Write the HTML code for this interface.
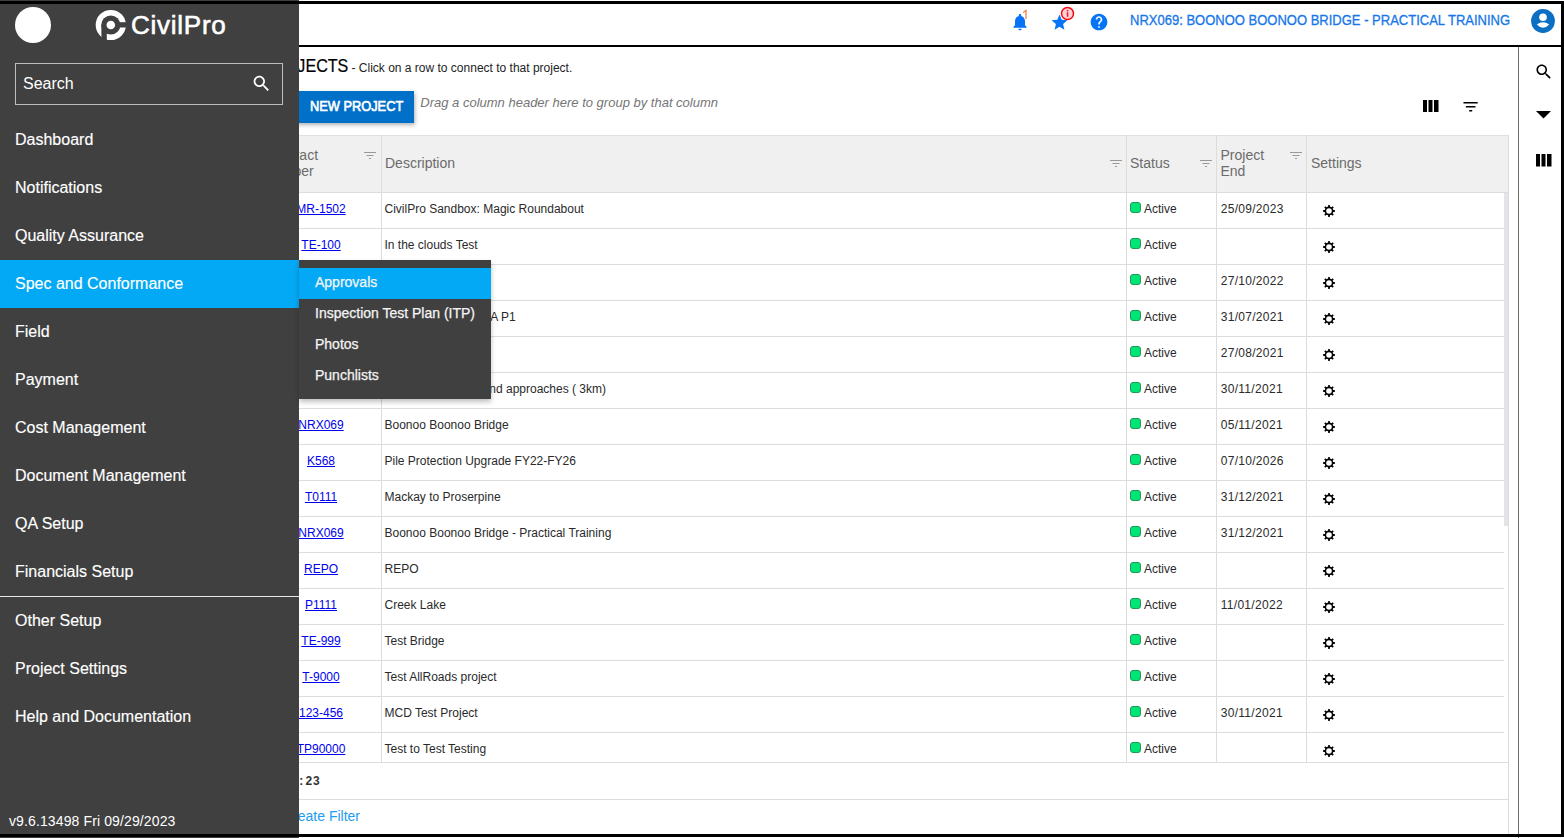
<!DOCTYPE html>
<html><head><meta charset="utf-8">
<style>
*{box-sizing:border-box;margin:0;padding:0}
html,body{width:1564px;height:838px;overflow:hidden;background:#fff;font-family:"Liberation Sans",sans-serif}
body{position:relative}
.t{position:absolute;white-space:nowrap}
.a{position:absolute}
</style></head><body>

<div class="a" style="left:0;top:0;width:1564px;height:45px;background:#fff"></div>
<div class="a" style="left:0;top:45px;width:1564px;height:2px;background:#000"></div>
<div class="a" style="left:1518px;top:47px;width:1px;height:791px;background:#6f6f6f"></div>
<svg class="a" style="left:1009.5px;top:12px" width="20" height="20" viewBox="0 0 24 24"><path fill="#0574f7" d="M12 22c1.1 0 2-.9 2-2h-4c0 1.1.9 2 2 2zm6-6v-5c0-3.07-1.64-5.64-4.5-6.32V4c0-.83-.67-1.5-1.5-1.5s-1.5.67-1.5 1.5v.68C7.63 5.36 6 7.92 6 11v5l-2 2v1h16v-1l-2-2z"/></svg>
<svg class="a" style="left:1020px;top:8px" width="10" height="13" viewBox="0 0 10 13"><path d="M3.2 4.6 L6 2.4 L6 11" fill="none" stroke="#f26a2a" stroke-width="1.1"/></svg>
<svg class="a" style="left:1050px;top:13px" width="19" height="19" viewBox="0 0 24 24"><path fill="#0574f7" d="M12 17.27L18.18 21l-1.64-7.03L22 9.24l-7.19-.61L12 2 9.19 8.63 2 9.24l5.46 4.73L5.82 21z"/></svg>
<svg class="a" style="left:1060px;top:6px" width="15" height="15" viewBox="0 0 15 15"><circle cx="7.5" cy="7.5" r="6" fill="#ffd3d6" stroke="#f5050f" stroke-width="1.5"/><rect x="6.8" y="6.3" width="1.5" height="4.5" fill="#f0102a"/><rect x="6.8" y="4" width="1.5" height="1.5" fill="#f0102a"/></svg>
<svg class="a" style="left:1089px;top:12px" width="20" height="20" viewBox="0 0 24 24"><path fill="#0574f7" d="M12 2C6.48 2 2 6.48 2 12s4.48 10 10 10 10-4.48 10-10S17.52 2 12 2zm1 17h-2v-2h2v2zm2.07-7.75l-.9.92C13.45 12.9 13 13.5 13 15h-2v-.5c0-1.1.45-2.1 1.17-2.83l1.24-1.26c.37-.36.59-.86.59-1.41 0-1.1-.9-2-2-2s-2 .9-2 2H8c0-2.21 1.79-4 4-4s4 1.79 4 4c0 .88-.36 1.68-.93 2.25z"/></svg>
<div class="t " style="left:1129.5px;top:13.15px;font-size:14px;line-height:14px;color:#1777e8;font-weight:normal;font-style:normal;transform:scaleX(0.929);transform-origin:0 0;-webkit-text-stroke:0.3px #1777e8">NRX069: BOONOO BOONOO BRIDGE - PRACTICAL TRAINING</div>
<svg class="a" style="left:1531px;top:9px" width="24" height="24" viewBox="0 0 24 24"><circle cx="12" cy="12" r="11.9" fill="#0b6fc4"/><circle cx="12" cy="8.3" r="3.8" fill="#fff"/><path d="M5.8 15.5Q12 11.1 18.2 15.5Q12 22.1 5.8 15.5Z" fill="#fff"/></svg>
<svg class="a" style="left:1533.5px;top:62px" width="19.6" height="19.6" viewBox="0 0 24 24"><path fill="#000" d="M15.5 14h-.79l-.28-.27C15.41 12.59 16 11.11 16 9.5 16 5.91 13.09 3 9.5 3S3 5.91 3 9.5 5.91 16 9.5 16c1.61 0 3.09-.59 4.23-1.57l.27.28v.79l5 4.99L20.49 19l-4.99-5zm-6 0C7.01 14 5 11.99 5 9.5S7.01 5 9.5 5 14 7.01 14 9.5 11.99 14 9.5 14z"/></svg>
<svg class="a" style="left:1536px;top:111px" width="16" height="8" viewBox="0 0 16 8"><path fill="#000" d="M0 0h15l-7.5 7.5z"/></svg>
<svg class="a" style="left:1536px;top:154px" width="16" height="13" viewBox="0 0 16 13"><rect x="0" y="0" width="4" height="12.5" fill="#000"/><rect x="5.5" y="0" width="4" height="12.5" fill="#000"/><rect x="11" y="0" width="4.5" height="12.5" fill="#000"/></svg>
<div class="t " style="left:254.65625px;top:57.89px;font-size:17.5px;line-height:17.5px;color:#000;font-weight:normal;font-style:normal;transform:scaleX(0.92);transform-origin:100% 0;-webkit-text-stroke:0.2px #000">PROJECTS</div>
<div class="t " style="left:351.5px;top:62.34px;font-size:12px;line-height:12px;color:#222;font-weight:normal;font-style:normal;word-spacing:0px">- Click on a row to connect to that project.</div>
<div class="a" style="left:250px;top:91px;width:164px;height:32px;background:#0070c9;box-shadow:1px 2px 4px rgba(0,0,0,.3)"></div>
<div class="t " style="left:309.6px;top:99.15px;font-size:14px;line-height:14px;color:#fff;font-weight:normal;font-style:normal;transform:scaleX(0.915);transform-origin:0 0;-webkit-text-stroke:0.65px #fff">NEW PROJECT</div>
<div class="t " style="left:420.3px;top:96.20px;font-size:13px;line-height:13px;color:#757575;font-weight:normal;font-style:italic;">Drag a column header here to group by that column</div>
<svg class="a" style="left:1423px;top:100px" width="16" height="12" viewBox="0 0 16 12"><rect x="0" y="0" width="4" height="12" fill="#000"/><rect x="5.5" y="0" width="4" height="12" fill="#000"/><rect x="11" y="0" width="4.5" height="12" fill="#000"/></svg>
<svg class="a" style="left:1463px;top:101.6px" width="16" height="11" viewBox="0 0 16 11"><rect x="0.4" y="0" width="14.4" height="1.5" rx="0.6" fill="#000"/><rect x="2.8" y="4.05" width="9.8" height="1.5" rx="0.6" fill="#000"/><rect x="6.1" y="8.0" width="3.2" height="1.5" rx="0.6" fill="#000"/></svg>
<div class="a" style="left:261px;top:135px;width:1248px;height:57px;background:#f0f0f0;border-top:1px solid #e0e0e0"></div>
<div class="a" style="left:261px;top:192px;width:1248px;height:1px;background:#dcdcdc"></div>
<div class="a" style="left:1508px;top:135px;width:1px;height:699px;background:#dcdcdc"></div>
<div class="a" style="left:381px;top:135px;width:1px;height:627px;background:#dcdcdc"></div>
<div class="a" style="left:1126px;top:135px;width:1px;height:627px;background:#dcdcdc"></div>
<div class="a" style="left:1216px;top:135px;width:1px;height:627px;background:#dcdcdc"></div>
<div class="a" style="left:1306px;top:135px;width:1px;height:627px;background:#dcdcdc"></div>
<div class="t " style="left:265.109375px;top:147.85px;font-size:14px;line-height:14px;color:#6b6b6b;font-weight:normal;font-style:normal;">Contract</div>
<div class="t " style="left:263.934375px;top:163.95px;font-size:14px;line-height:14px;color:#6b6b6b;font-weight:normal;font-style:normal;">Number</div>
<div class="t " style="left:385px;top:156.15px;font-size:14px;line-height:14px;color:#6b6b6b;font-weight:normal;font-style:normal;">Description</div>
<div class="t " style="left:1130px;top:156.15px;font-size:14px;line-height:14px;color:#6b6b6b;font-weight:normal;font-style:normal;">Status</div>
<div class="t " style="left:1220.5px;top:147.85px;font-size:14px;line-height:14px;color:#6b6b6b;font-weight:normal;font-style:normal;">Project</div>
<div class="t " style="left:1220.5px;top:163.95px;font-size:14px;line-height:14px;color:#6b6b6b;font-weight:normal;font-style:normal;">End</div>
<div class="t " style="left:1311px;top:156.15px;font-size:14px;line-height:14px;color:#6b6b6b;font-weight:normal;font-style:normal;">Settings</div>
<svg class="a" style="left:364px;top:152px" width="13" height="8" viewBox="0 0 13 8"><rect x="0" y="0" width="12" height="1" fill="#999"/><rect x="2.5" y="3" width="7" height="1" fill="#999"/><rect x="5" y="6" width="2" height="1" fill="#999"/></svg>
<svg class="a" style="left:1110px;top:160px" width="13" height="8" viewBox="0 0 13 8"><rect x="0" y="0" width="12" height="1" fill="#999"/><rect x="2.5" y="3" width="7" height="1" fill="#999"/><rect x="5" y="6" width="2" height="1" fill="#999"/></svg>
<svg class="a" style="left:1200px;top:160px" width="13" height="8" viewBox="0 0 13 8"><rect x="0" y="0" width="12" height="1" fill="#999"/><rect x="2.5" y="3" width="7" height="1" fill="#999"/><rect x="5" y="6" width="2" height="1" fill="#999"/></svg>
<svg class="a" style="left:1290px;top:152px" width="13" height="8" viewBox="0 0 13 8"><rect x="0" y="0" width="12" height="1" fill="#999"/><rect x="2.5" y="3" width="7" height="1" fill="#999"/><rect x="5" y="6" width="2" height="1" fill="#999"/></svg>
<div class="a" style="left:261px;top:193px;width:1247px;height:569px;overflow:hidden">
<div class="t " style="left:35.3203125px;top:10.04px;font-size:12px;line-height:12px;color:#0000ee;font-weight:normal;font-style:normal;text-decoration:underline">MR-1502</div>
<div class="t " style="left:123.5px;top:10.04px;font-size:12px;line-height:12px;color:#2a2a2a;font-weight:normal;font-style:normal;">CivilPro Sandbox: Magic Roundabout</div>
<div class="a" style="left:869px;top:9.2px;width:11px;height:11px;background:#00e676;border:1px solid #1e9c55;border-radius:3px"></div>
<div class="t " style="left:883px;top:10.04px;font-size:12px;line-height:12px;color:#2a2a2a;font-weight:normal;font-style:normal;">Active</div>
<div class="t " style="left:959.7px;top:10.04px;font-size:12px;line-height:12px;color:#2a2a2a;font-weight:normal;font-style:normal;letter-spacing:0.3px">25/09/2023</div>
<svg class="a" style="left:1060.8px;top:10.6px" width="14" height="14" viewBox="-7 -7 14 14"><g fill="#000"><circle r="4.4"/><rect x="-0.9" y="-5.9" width="1.8" height="3" rx="0.3" transform="rotate(0)"/><rect x="-0.9" y="-5.9" width="1.8" height="3" rx="0.3" transform="rotate(45)"/><rect x="-0.9" y="-5.9" width="1.8" height="3" rx="0.3" transform="rotate(90)"/><rect x="-0.9" y="-5.9" width="1.8" height="3" rx="0.3" transform="rotate(135)"/><rect x="-0.9" y="-5.9" width="1.8" height="3" rx="0.3" transform="rotate(180)"/><rect x="-0.9" y="-5.9" width="1.8" height="3" rx="0.3" transform="rotate(225)"/><rect x="-0.9" y="-5.9" width="1.8" height="3" rx="0.3" transform="rotate(270)"/><rect x="-0.9" y="-5.9" width="1.8" height="3" rx="0.3" transform="rotate(315)"/></g><circle r="2.8" fill="#fff"/></svg>
<div class="a" style="left:0;top:35px;width:1243px;height:1px;background:#dcdcdc"></div>
<div class="t " style="left:40.328125px;top:46.04px;font-size:12px;line-height:12px;color:#0000ee;font-weight:normal;font-style:normal;text-decoration:underline">TE-100</div>
<div class="t " style="left:123.5px;top:46.04px;font-size:12px;line-height:12px;color:#2a2a2a;font-weight:normal;font-style:normal;">In the clouds Test</div>
<div class="a" style="left:869px;top:45.2px;width:11px;height:11px;background:#00e676;border:1px solid #1e9c55;border-radius:3px"></div>
<div class="t " style="left:883px;top:46.04px;font-size:12px;line-height:12px;color:#2a2a2a;font-weight:normal;font-style:normal;">Active</div>
<svg class="a" style="left:1060.8px;top:46.6px" width="14" height="14" viewBox="-7 -7 14 14"><g fill="#000"><circle r="4.4"/><rect x="-0.9" y="-5.9" width="1.8" height="3" rx="0.3" transform="rotate(0)"/><rect x="-0.9" y="-5.9" width="1.8" height="3" rx="0.3" transform="rotate(45)"/><rect x="-0.9" y="-5.9" width="1.8" height="3" rx="0.3" transform="rotate(90)"/><rect x="-0.9" y="-5.9" width="1.8" height="3" rx="0.3" transform="rotate(135)"/><rect x="-0.9" y="-5.9" width="1.8" height="3" rx="0.3" transform="rotate(180)"/><rect x="-0.9" y="-5.9" width="1.8" height="3" rx="0.3" transform="rotate(225)"/><rect x="-0.9" y="-5.9" width="1.8" height="3" rx="0.3" transform="rotate(270)"/><rect x="-0.9" y="-5.9" width="1.8" height="3" rx="0.3" transform="rotate(315)"/></g><circle r="2.8" fill="#fff"/></svg>
<div class="a" style="left:0;top:71px;width:1243px;height:1px;background:#dcdcdc"></div>
<div class="t " style="left:39.9921875px;top:82.04px;font-size:12px;line-height:12px;color:#0000ee;font-weight:normal;font-style:normal;text-decoration:underline">AB-200</div>
<div class="t " style="left:123.5px;top:82.04px;font-size:12px;line-height:12px;color:#2a2a2a;font-weight:normal;font-style:normal;">Hidden Project</div>
<div class="a" style="left:869px;top:81.2px;width:11px;height:11px;background:#00e676;border:1px solid #1e9c55;border-radius:3px"></div>
<div class="t " style="left:883px;top:82.04px;font-size:12px;line-height:12px;color:#2a2a2a;font-weight:normal;font-style:normal;">Active</div>
<div class="t " style="left:959.7px;top:82.04px;font-size:12px;line-height:12px;color:#2a2a2a;font-weight:normal;font-style:normal;letter-spacing:0.3px">27/10/2022</div>
<svg class="a" style="left:1060.8px;top:82.6px" width="14" height="14" viewBox="-7 -7 14 14"><g fill="#000"><circle r="4.4"/><rect x="-0.9" y="-5.9" width="1.8" height="3" rx="0.3" transform="rotate(0)"/><rect x="-0.9" y="-5.9" width="1.8" height="3" rx="0.3" transform="rotate(45)"/><rect x="-0.9" y="-5.9" width="1.8" height="3" rx="0.3" transform="rotate(90)"/><rect x="-0.9" y="-5.9" width="1.8" height="3" rx="0.3" transform="rotate(135)"/><rect x="-0.9" y="-5.9" width="1.8" height="3" rx="0.3" transform="rotate(180)"/><rect x="-0.9" y="-5.9" width="1.8" height="3" rx="0.3" transform="rotate(225)"/><rect x="-0.9" y="-5.9" width="1.8" height="3" rx="0.3" transform="rotate(270)"/><rect x="-0.9" y="-5.9" width="1.8" height="3" rx="0.3" transform="rotate(315)"/></g><circle r="2.8" fill="#fff"/></svg>
<div class="a" style="left:0;top:107px;width:1243px;height:1px;background:#dcdcdc"></div>
<div class="t " style="left:39.3203125px;top:118.04px;font-size:12px;line-height:12px;color:#0000ee;font-weight:normal;font-style:normal;text-decoration:underline">CD-300</div>
<div class="t " style="left:126.65312500000005px;top:118.04px;font-size:12px;line-height:12px;color:#2a2a2a;font-weight:normal;font-style:normal;">Pacific Highway SFA P1</div>
<div class="a" style="left:869px;top:117.2px;width:11px;height:11px;background:#00e676;border:1px solid #1e9c55;border-radius:3px"></div>
<div class="t " style="left:883px;top:118.04px;font-size:12px;line-height:12px;color:#2a2a2a;font-weight:normal;font-style:normal;">Active</div>
<div class="t " style="left:959.7px;top:118.04px;font-size:12px;line-height:12px;color:#2a2a2a;font-weight:normal;font-style:normal;letter-spacing:0.3px">31/07/2021</div>
<svg class="a" style="left:1060.8px;top:118.6px" width="14" height="14" viewBox="-7 -7 14 14"><g fill="#000"><circle r="4.4"/><rect x="-0.9" y="-5.9" width="1.8" height="3" rx="0.3" transform="rotate(0)"/><rect x="-0.9" y="-5.9" width="1.8" height="3" rx="0.3" transform="rotate(45)"/><rect x="-0.9" y="-5.9" width="1.8" height="3" rx="0.3" transform="rotate(90)"/><rect x="-0.9" y="-5.9" width="1.8" height="3" rx="0.3" transform="rotate(135)"/><rect x="-0.9" y="-5.9" width="1.8" height="3" rx="0.3" transform="rotate(180)"/><rect x="-0.9" y="-5.9" width="1.8" height="3" rx="0.3" transform="rotate(225)"/><rect x="-0.9" y="-5.9" width="1.8" height="3" rx="0.3" transform="rotate(270)"/><rect x="-0.9" y="-5.9" width="1.8" height="3" rx="0.3" transform="rotate(315)"/></g><circle r="2.8" fill="#fff"/></svg>
<div class="a" style="left:0;top:143px;width:1243px;height:1px;background:#dcdcdc"></div>
<div class="t " style="left:40.328125px;top:154.04px;font-size:12px;line-height:12px;color:#0000ee;font-weight:normal;font-style:normal;text-decoration:underline">EF-400</div>
<div class="t " style="left:123.5px;top:154.04px;font-size:12px;line-height:12px;color:#2a2a2a;font-weight:normal;font-style:normal;">Hidden</div>
<div class="a" style="left:869px;top:153.2px;width:11px;height:11px;background:#00e676;border:1px solid #1e9c55;border-radius:3px"></div>
<div class="t " style="left:883px;top:154.04px;font-size:12px;line-height:12px;color:#2a2a2a;font-weight:normal;font-style:normal;">Active</div>
<div class="t " style="left:959.7px;top:154.04px;font-size:12px;line-height:12px;color:#2a2a2a;font-weight:normal;font-style:normal;letter-spacing:0.3px">27/08/2021</div>
<svg class="a" style="left:1060.8px;top:154.6px" width="14" height="14" viewBox="-7 -7 14 14"><g fill="#000"><circle r="4.4"/><rect x="-0.9" y="-5.9" width="1.8" height="3" rx="0.3" transform="rotate(0)"/><rect x="-0.9" y="-5.9" width="1.8" height="3" rx="0.3" transform="rotate(45)"/><rect x="-0.9" y="-5.9" width="1.8" height="3" rx="0.3" transform="rotate(90)"/><rect x="-0.9" y="-5.9" width="1.8" height="3" rx="0.3" transform="rotate(135)"/><rect x="-0.9" y="-5.9" width="1.8" height="3" rx="0.3" transform="rotate(180)"/><rect x="-0.9" y="-5.9" width="1.8" height="3" rx="0.3" transform="rotate(225)"/><rect x="-0.9" y="-5.9" width="1.8" height="3" rx="0.3" transform="rotate(270)"/><rect x="-0.9" y="-5.9" width="1.8" height="3" rx="0.3" transform="rotate(315)"/></g><circle r="2.8" fill="#fff"/></svg>
<div class="a" style="left:0;top:179px;width:1243px;height:1px;background:#dcdcdc"></div>
<div class="t " style="left:38.9921875px;top:190.04px;font-size:12px;line-height:12px;color:#0000ee;font-weight:normal;font-style:normal;text-decoration:underline">GH-500</div>
<div class="t " style="left:183.609375px;top:190.04px;font-size:12px;line-height:12px;color:#2a2a2a;font-weight:normal;font-style:normal;">Bridge and approaches ( 3km)</div>
<div class="a" style="left:869px;top:189.2px;width:11px;height:11px;background:#00e676;border:1px solid #1e9c55;border-radius:3px"></div>
<div class="t " style="left:883px;top:190.04px;font-size:12px;line-height:12px;color:#2a2a2a;font-weight:normal;font-style:normal;">Active</div>
<div class="t " style="left:959.7px;top:190.04px;font-size:12px;line-height:12px;color:#2a2a2a;font-weight:normal;font-style:normal;letter-spacing:0.3px">30/11/2021</div>
<svg class="a" style="left:1060.8px;top:190.6px" width="14" height="14" viewBox="-7 -7 14 14"><g fill="#000"><circle r="4.4"/><rect x="-0.9" y="-5.9" width="1.8" height="3" rx="0.3" transform="rotate(0)"/><rect x="-0.9" y="-5.9" width="1.8" height="3" rx="0.3" transform="rotate(45)"/><rect x="-0.9" y="-5.9" width="1.8" height="3" rx="0.3" transform="rotate(90)"/><rect x="-0.9" y="-5.9" width="1.8" height="3" rx="0.3" transform="rotate(135)"/><rect x="-0.9" y="-5.9" width="1.8" height="3" rx="0.3" transform="rotate(180)"/><rect x="-0.9" y="-5.9" width="1.8" height="3" rx="0.3" transform="rotate(225)"/><rect x="-0.9" y="-5.9" width="1.8" height="3" rx="0.3" transform="rotate(270)"/><rect x="-0.9" y="-5.9" width="1.8" height="3" rx="0.3" transform="rotate(315)"/></g><circle r="2.8" fill="#fff"/></svg>
<div class="a" style="left:0;top:215px;width:1243px;height:1px;background:#dcdcdc"></div>
<div class="t " style="left:37.3203125px;top:226.04px;font-size:12px;line-height:12px;color:#0000ee;font-weight:normal;font-style:normal;text-decoration:underline">NRX069</div>
<div class="t " style="left:123.5px;top:226.04px;font-size:12px;line-height:12px;color:#2a2a2a;font-weight:normal;font-style:normal;">Boonoo Boonoo Bridge</div>
<div class="a" style="left:869px;top:225.2px;width:11px;height:11px;background:#00e676;border:1px solid #1e9c55;border-radius:3px"></div>
<div class="t " style="left:883px;top:226.04px;font-size:12px;line-height:12px;color:#2a2a2a;font-weight:normal;font-style:normal;">Active</div>
<div class="t " style="left:959.7px;top:226.04px;font-size:12px;line-height:12px;color:#2a2a2a;font-weight:normal;font-style:normal;letter-spacing:0.3px">05/11/2021</div>
<svg class="a" style="left:1060.8px;top:226.6px" width="14" height="14" viewBox="-7 -7 14 14"><g fill="#000"><circle r="4.4"/><rect x="-0.9" y="-5.9" width="1.8" height="3" rx="0.3" transform="rotate(0)"/><rect x="-0.9" y="-5.9" width="1.8" height="3" rx="0.3" transform="rotate(45)"/><rect x="-0.9" y="-5.9" width="1.8" height="3" rx="0.3" transform="rotate(90)"/><rect x="-0.9" y="-5.9" width="1.8" height="3" rx="0.3" transform="rotate(135)"/><rect x="-0.9" y="-5.9" width="1.8" height="3" rx="0.3" transform="rotate(180)"/><rect x="-0.9" y="-5.9" width="1.8" height="3" rx="0.3" transform="rotate(225)"/><rect x="-0.9" y="-5.9" width="1.8" height="3" rx="0.3" transform="rotate(270)"/><rect x="-0.9" y="-5.9" width="1.8" height="3" rx="0.3" transform="rotate(315)"/></g><circle r="2.8" fill="#fff"/></svg>
<div class="a" style="left:0;top:251px;width:1243px;height:1px;background:#dcdcdc"></div>
<div class="t " style="left:45.9921875px;top:262.04px;font-size:12px;line-height:12px;color:#0000ee;font-weight:normal;font-style:normal;text-decoration:underline">K568</div>
<div class="t " style="left:123.5px;top:262.04px;font-size:12px;line-height:12px;color:#2a2a2a;font-weight:normal;font-style:normal;">Pile Protection Upgrade FY22-FY26</div>
<div class="a" style="left:869px;top:261.2px;width:11px;height:11px;background:#00e676;border:1px solid #1e9c55;border-radius:3px"></div>
<div class="t " style="left:883px;top:262.04px;font-size:12px;line-height:12px;color:#2a2a2a;font-weight:normal;font-style:normal;">Active</div>
<div class="t " style="left:959.7px;top:262.04px;font-size:12px;line-height:12px;color:#2a2a2a;font-weight:normal;font-style:normal;letter-spacing:0.3px">07/10/2026</div>
<svg class="a" style="left:1060.8px;top:262.6px" width="14" height="14" viewBox="-7 -7 14 14"><g fill="#000"><circle r="4.4"/><rect x="-0.9" y="-5.9" width="1.8" height="3" rx="0.3" transform="rotate(0)"/><rect x="-0.9" y="-5.9" width="1.8" height="3" rx="0.3" transform="rotate(45)"/><rect x="-0.9" y="-5.9" width="1.8" height="3" rx="0.3" transform="rotate(90)"/><rect x="-0.9" y="-5.9" width="1.8" height="3" rx="0.3" transform="rotate(135)"/><rect x="-0.9" y="-5.9" width="1.8" height="3" rx="0.3" transform="rotate(180)"/><rect x="-0.9" y="-5.9" width="1.8" height="3" rx="0.3" transform="rotate(225)"/><rect x="-0.9" y="-5.9" width="1.8" height="3" rx="0.3" transform="rotate(270)"/><rect x="-0.9" y="-5.9" width="1.8" height="3" rx="0.3" transform="rotate(315)"/></g><circle r="2.8" fill="#fff"/></svg>
<div class="a" style="left:0;top:287px;width:1243px;height:1px;background:#dcdcdc"></div>
<div class="t " style="left:43.8828125px;top:298.04px;font-size:12px;line-height:12px;color:#0000ee;font-weight:normal;font-style:normal;text-decoration:underline">T0111</div>
<div class="t " style="left:123.5px;top:298.04px;font-size:12px;line-height:12px;color:#2a2a2a;font-weight:normal;font-style:normal;">Mackay to Proserpine</div>
<div class="a" style="left:869px;top:297.2px;width:11px;height:11px;background:#00e676;border:1px solid #1e9c55;border-radius:3px"></div>
<div class="t " style="left:883px;top:298.04px;font-size:12px;line-height:12px;color:#2a2a2a;font-weight:normal;font-style:normal;">Active</div>
<div class="t " style="left:959.7px;top:298.04px;font-size:12px;line-height:12px;color:#2a2a2a;font-weight:normal;font-style:normal;letter-spacing:0.3px">31/12/2021</div>
<svg class="a" style="left:1060.8px;top:298.6px" width="14" height="14" viewBox="-7 -7 14 14"><g fill="#000"><circle r="4.4"/><rect x="-0.9" y="-5.9" width="1.8" height="3" rx="0.3" transform="rotate(0)"/><rect x="-0.9" y="-5.9" width="1.8" height="3" rx="0.3" transform="rotate(45)"/><rect x="-0.9" y="-5.9" width="1.8" height="3" rx="0.3" transform="rotate(90)"/><rect x="-0.9" y="-5.9" width="1.8" height="3" rx="0.3" transform="rotate(135)"/><rect x="-0.9" y="-5.9" width="1.8" height="3" rx="0.3" transform="rotate(180)"/><rect x="-0.9" y="-5.9" width="1.8" height="3" rx="0.3" transform="rotate(225)"/><rect x="-0.9" y="-5.9" width="1.8" height="3" rx="0.3" transform="rotate(270)"/><rect x="-0.9" y="-5.9" width="1.8" height="3" rx="0.3" transform="rotate(315)"/></g><circle r="2.8" fill="#fff"/></svg>
<div class="a" style="left:0;top:323px;width:1243px;height:1px;background:#dcdcdc"></div>
<div class="t " style="left:37.3203125px;top:334.04px;font-size:12px;line-height:12px;color:#0000ee;font-weight:normal;font-style:normal;text-decoration:underline">NRX069</div>
<div class="t " style="left:123.5px;top:334.04px;font-size:12px;line-height:12px;color:#2a2a2a;font-weight:normal;font-style:normal;">Boonoo Boonoo Bridge - Practical Training</div>
<div class="a" style="left:869px;top:333.2px;width:11px;height:11px;background:#00e676;border:1px solid #1e9c55;border-radius:3px"></div>
<div class="t " style="left:883px;top:334.04px;font-size:12px;line-height:12px;color:#2a2a2a;font-weight:normal;font-style:normal;">Active</div>
<div class="t " style="left:959.7px;top:334.04px;font-size:12px;line-height:12px;color:#2a2a2a;font-weight:normal;font-style:normal;letter-spacing:0.3px">31/12/2021</div>
<svg class="a" style="left:1060.8px;top:334.6px" width="14" height="14" viewBox="-7 -7 14 14"><g fill="#000"><circle r="4.4"/><rect x="-0.9" y="-5.9" width="1.8" height="3" rx="0.3" transform="rotate(0)"/><rect x="-0.9" y="-5.9" width="1.8" height="3" rx="0.3" transform="rotate(45)"/><rect x="-0.9" y="-5.9" width="1.8" height="3" rx="0.3" transform="rotate(90)"/><rect x="-0.9" y="-5.9" width="1.8" height="3" rx="0.3" transform="rotate(135)"/><rect x="-0.9" y="-5.9" width="1.8" height="3" rx="0.3" transform="rotate(180)"/><rect x="-0.9" y="-5.9" width="1.8" height="3" rx="0.3" transform="rotate(225)"/><rect x="-0.9" y="-5.9" width="1.8" height="3" rx="0.3" transform="rotate(270)"/><rect x="-0.9" y="-5.9" width="1.8" height="3" rx="0.3" transform="rotate(315)"/></g><circle r="2.8" fill="#fff"/></svg>
<div class="a" style="left:0;top:359px;width:1243px;height:1px;background:#dcdcdc"></div>
<div class="t " style="left:43.0px;top:370.04px;font-size:12px;line-height:12px;color:#0000ee;font-weight:normal;font-style:normal;text-decoration:underline">REPO</div>
<div class="t " style="left:123.5px;top:370.04px;font-size:12px;line-height:12px;color:#2a2a2a;font-weight:normal;font-style:normal;">REPO</div>
<div class="a" style="left:869px;top:369.2px;width:11px;height:11px;background:#00e676;border:1px solid #1e9c55;border-radius:3px"></div>
<div class="t " style="left:883px;top:370.04px;font-size:12px;line-height:12px;color:#2a2a2a;font-weight:normal;font-style:normal;">Active</div>
<svg class="a" style="left:1060.8px;top:370.6px" width="14" height="14" viewBox="-7 -7 14 14"><g fill="#000"><circle r="4.4"/><rect x="-0.9" y="-5.9" width="1.8" height="3" rx="0.3" transform="rotate(0)"/><rect x="-0.9" y="-5.9" width="1.8" height="3" rx="0.3" transform="rotate(45)"/><rect x="-0.9" y="-5.9" width="1.8" height="3" rx="0.3" transform="rotate(90)"/><rect x="-0.9" y="-5.9" width="1.8" height="3" rx="0.3" transform="rotate(135)"/><rect x="-0.9" y="-5.9" width="1.8" height="3" rx="0.3" transform="rotate(180)"/><rect x="-0.9" y="-5.9" width="1.8" height="3" rx="0.3" transform="rotate(225)"/><rect x="-0.9" y="-5.9" width="1.8" height="3" rx="0.3" transform="rotate(270)"/><rect x="-0.9" y="-5.9" width="1.8" height="3" rx="0.3" transform="rotate(315)"/></g><circle r="2.8" fill="#fff"/></svg>
<div class="a" style="left:0;top:395px;width:1243px;height:1px;background:#dcdcdc"></div>
<div class="t " style="left:43.9921875px;top:406.04px;font-size:12px;line-height:12px;color:#0000ee;font-weight:normal;font-style:normal;text-decoration:underline">P1111</div>
<div class="t " style="left:123.5px;top:406.04px;font-size:12px;line-height:12px;color:#2a2a2a;font-weight:normal;font-style:normal;">Creek Lake</div>
<div class="a" style="left:869px;top:405.2px;width:11px;height:11px;background:#00e676;border:1px solid #1e9c55;border-radius:3px"></div>
<div class="t " style="left:883px;top:406.04px;font-size:12px;line-height:12px;color:#2a2a2a;font-weight:normal;font-style:normal;">Active</div>
<div class="t " style="left:959.7px;top:406.04px;font-size:12px;line-height:12px;color:#2a2a2a;font-weight:normal;font-style:normal;letter-spacing:0.3px">11/01/2022</div>
<svg class="a" style="left:1060.8px;top:406.6px" width="14" height="14" viewBox="-7 -7 14 14"><g fill="#000"><circle r="4.4"/><rect x="-0.9" y="-5.9" width="1.8" height="3" rx="0.3" transform="rotate(0)"/><rect x="-0.9" y="-5.9" width="1.8" height="3" rx="0.3" transform="rotate(45)"/><rect x="-0.9" y="-5.9" width="1.8" height="3" rx="0.3" transform="rotate(90)"/><rect x="-0.9" y="-5.9" width="1.8" height="3" rx="0.3" transform="rotate(135)"/><rect x="-0.9" y="-5.9" width="1.8" height="3" rx="0.3" transform="rotate(180)"/><rect x="-0.9" y="-5.9" width="1.8" height="3" rx="0.3" transform="rotate(225)"/><rect x="-0.9" y="-5.9" width="1.8" height="3" rx="0.3" transform="rotate(270)"/><rect x="-0.9" y="-5.9" width="1.8" height="3" rx="0.3" transform="rotate(315)"/></g><circle r="2.8" fill="#fff"/></svg>
<div class="a" style="left:0;top:431px;width:1243px;height:1px;background:#dcdcdc"></div>
<div class="t " style="left:40.328125px;top:442.04px;font-size:12px;line-height:12px;color:#0000ee;font-weight:normal;font-style:normal;text-decoration:underline">TE-999</div>
<div class="t " style="left:123.5px;top:442.04px;font-size:12px;line-height:12px;color:#2a2a2a;font-weight:normal;font-style:normal;">Test Bridge</div>
<div class="a" style="left:869px;top:441.2px;width:11px;height:11px;background:#00e676;border:1px solid #1e9c55;border-radius:3px"></div>
<div class="t " style="left:883px;top:442.04px;font-size:12px;line-height:12px;color:#2a2a2a;font-weight:normal;font-style:normal;">Active</div>
<svg class="a" style="left:1060.8px;top:442.6px" width="14" height="14" viewBox="-7 -7 14 14"><g fill="#000"><circle r="4.4"/><rect x="-0.9" y="-5.9" width="1.8" height="3" rx="0.3" transform="rotate(0)"/><rect x="-0.9" y="-5.9" width="1.8" height="3" rx="0.3" transform="rotate(45)"/><rect x="-0.9" y="-5.9" width="1.8" height="3" rx="0.3" transform="rotate(90)"/><rect x="-0.9" y="-5.9" width="1.8" height="3" rx="0.3" transform="rotate(135)"/><rect x="-0.9" y="-5.9" width="1.8" height="3" rx="0.3" transform="rotate(180)"/><rect x="-0.9" y="-5.9" width="1.8" height="3" rx="0.3" transform="rotate(225)"/><rect x="-0.9" y="-5.9" width="1.8" height="3" rx="0.3" transform="rotate(270)"/><rect x="-0.9" y="-5.9" width="1.8" height="3" rx="0.3" transform="rotate(315)"/></g><circle r="2.8" fill="#fff"/></svg>
<div class="a" style="left:0;top:467px;width:1243px;height:1px;background:#dcdcdc"></div>
<div class="t " style="left:41.3203125px;top:478.04px;font-size:12px;line-height:12px;color:#0000ee;font-weight:normal;font-style:normal;text-decoration:underline">T-9000</div>
<div class="t " style="left:123.5px;top:478.04px;font-size:12px;line-height:12px;color:#2a2a2a;font-weight:normal;font-style:normal;">Test AllRoads project</div>
<div class="a" style="left:869px;top:477.2px;width:11px;height:11px;background:#00e676;border:1px solid #1e9c55;border-radius:3px"></div>
<div class="t " style="left:883px;top:478.04px;font-size:12px;line-height:12px;color:#2a2a2a;font-weight:normal;font-style:normal;">Active</div>
<svg class="a" style="left:1060.8px;top:478.6px" width="14" height="14" viewBox="-7 -7 14 14"><g fill="#000"><circle r="4.4"/><rect x="-0.9" y="-5.9" width="1.8" height="3" rx="0.3" transform="rotate(0)"/><rect x="-0.9" y="-5.9" width="1.8" height="3" rx="0.3" transform="rotate(45)"/><rect x="-0.9" y="-5.9" width="1.8" height="3" rx="0.3" transform="rotate(90)"/><rect x="-0.9" y="-5.9" width="1.8" height="3" rx="0.3" transform="rotate(135)"/><rect x="-0.9" y="-5.9" width="1.8" height="3" rx="0.3" transform="rotate(180)"/><rect x="-0.9" y="-5.9" width="1.8" height="3" rx="0.3" transform="rotate(225)"/><rect x="-0.9" y="-5.9" width="1.8" height="3" rx="0.3" transform="rotate(270)"/><rect x="-0.9" y="-5.9" width="1.8" height="3" rx="0.3" transform="rotate(315)"/></g><circle r="2.8" fill="#fff"/></svg>
<div class="a" style="left:0;top:503px;width:1243px;height:1px;background:#dcdcdc"></div>
<div class="t " style="left:37.984375px;top:514.04px;font-size:12px;line-height:12px;color:#0000ee;font-weight:normal;font-style:normal;text-decoration:underline">123-456</div>
<div class="t " style="left:123.5px;top:514.04px;font-size:12px;line-height:12px;color:#2a2a2a;font-weight:normal;font-style:normal;">MCD Test Project</div>
<div class="a" style="left:869px;top:513.2px;width:11px;height:11px;background:#00e676;border:1px solid #1e9c55;border-radius:3px"></div>
<div class="t " style="left:883px;top:514.04px;font-size:12px;line-height:12px;color:#2a2a2a;font-weight:normal;font-style:normal;">Active</div>
<div class="t " style="left:959.7px;top:514.04px;font-size:12px;line-height:12px;color:#2a2a2a;font-weight:normal;font-style:normal;letter-spacing:0.3px">30/11/2021</div>
<svg class="a" style="left:1060.8px;top:514.6px" width="14" height="14" viewBox="-7 -7 14 14"><g fill="#000"><circle r="4.4"/><rect x="-0.9" y="-5.9" width="1.8" height="3" rx="0.3" transform="rotate(0)"/><rect x="-0.9" y="-5.9" width="1.8" height="3" rx="0.3" transform="rotate(45)"/><rect x="-0.9" y="-5.9" width="1.8" height="3" rx="0.3" transform="rotate(90)"/><rect x="-0.9" y="-5.9" width="1.8" height="3" rx="0.3" transform="rotate(135)"/><rect x="-0.9" y="-5.9" width="1.8" height="3" rx="0.3" transform="rotate(180)"/><rect x="-0.9" y="-5.9" width="1.8" height="3" rx="0.3" transform="rotate(225)"/><rect x="-0.9" y="-5.9" width="1.8" height="3" rx="0.3" transform="rotate(270)"/><rect x="-0.9" y="-5.9" width="1.8" height="3" rx="0.3" transform="rotate(315)"/></g><circle r="2.8" fill="#fff"/></svg>
<div class="a" style="left:0;top:539px;width:1243px;height:1px;background:#dcdcdc"></div>
<div class="t " style="left:35.65625px;top:550.04px;font-size:12px;line-height:12px;color:#0000ee;font-weight:normal;font-style:normal;text-decoration:underline">TP90000</div>
<div class="t " style="left:123.5px;top:550.04px;font-size:12px;line-height:12px;color:#2a2a2a;font-weight:normal;font-style:normal;">Test to Test Testing</div>
<div class="a" style="left:869px;top:549.2px;width:11px;height:11px;background:#00e676;border:1px solid #1e9c55;border-radius:3px"></div>
<div class="t " style="left:883px;top:550.04px;font-size:12px;line-height:12px;color:#2a2a2a;font-weight:normal;font-style:normal;">Active</div>
<svg class="a" style="left:1060.8px;top:550.6px" width="14" height="14" viewBox="-7 -7 14 14"><g fill="#000"><circle r="4.4"/><rect x="-0.9" y="-5.9" width="1.8" height="3" rx="0.3" transform="rotate(0)"/><rect x="-0.9" y="-5.9" width="1.8" height="3" rx="0.3" transform="rotate(45)"/><rect x="-0.9" y="-5.9" width="1.8" height="3" rx="0.3" transform="rotate(90)"/><rect x="-0.9" y="-5.9" width="1.8" height="3" rx="0.3" transform="rotate(135)"/><rect x="-0.9" y="-5.9" width="1.8" height="3" rx="0.3" transform="rotate(180)"/><rect x="-0.9" y="-5.9" width="1.8" height="3" rx="0.3" transform="rotate(225)"/><rect x="-0.9" y="-5.9" width="1.8" height="3" rx="0.3" transform="rotate(270)"/><rect x="-0.9" y="-5.9" width="1.8" height="3" rx="0.3" transform="rotate(315)"/></g><circle r="2.8" fill="#fff"/></svg>
<div class="a" style="left:0;top:575px;width:1243px;height:1px;background:#dcdcdc"></div>
</div>
<div class="a" style="left:1504px;top:193px;width:4px;height:333px;background:#e4e4e8"></div>
<div class="a" style="left:261px;top:762px;width:1247px;height:1px;background:#dcdcdc"></div>
<div class="a" style="left:261px;top:799px;width:1247px;height:1px;background:#dcdcdc"></div>
<div class="t " style="left:299.2px;top:774.54px;font-size:12px;line-height:12px;color:#333;font-weight:bold;font-style:normal;">:</div>
<div class="t " style="left:305.6px;top:774.54px;font-size:12px;line-height:12px;color:#333;font-weight:bold;font-style:normal;letter-spacing:0.8px">23</div>
<div class="t " style="left:283.015625px;top:809.15px;font-size:14px;line-height:14px;color:#1e9cf0;font-weight:normal;font-style:normal;">Create Filter</div>
<div class="a" style="left:0;top:0;width:299px;height:838px;background:#404040;z-index:20">
<div class="a" style="left:15px;top:7px;width:36px;height:36px;border-radius:50%;background:#fff"></div>
<svg class="a" style="left:90px;top:5px" width="45" height="40" viewBox="0 0 45 40"><circle cx="20.8" cy="20" r="15.1" fill="#fff"/><circle cx="20.8" cy="20" r="9.6" fill="#404040"/><rect x="11.4" y="20" width="5.4" height="20" fill="#404040"/><rect x="20.8" y="17.2" width="20" height="5.3" fill="#404040"/><circle cx="20.8" cy="20" r="4.3" fill="#fff"/></svg>
<div class="t " style="left:131px;top:11.99px;font-size:26px;line-height:26px;color:#fff;font-weight:normal;font-style:normal;letter-spacing:0.75px;-webkit-text-stroke:0.6px #fff">CivilPro</div>
<div class="a" style="left:15px;top:63px;width:268px;height:42px;border:1px solid #bdbdbd"></div>
<div class="t " style="left:23px;top:76.26px;font-size:16px;line-height:16px;color:#fff;font-weight:normal;font-style:normal;">Search</div>
<svg class="a" style="left:251.2px;top:72.9px" width="21" height="21" viewBox="0 0 24 24"><path fill="#fff" d="M15.5 14h-.79l-.28-.27C15.41 12.59 16 11.11 16 9.5 16 5.91 13.09 3 9.5 3S3 5.91 3 9.5 5.91 16 9.5 16c1.61 0 3.09-.59 4.23-1.57l.27.28v.79l5 4.99L20.49 19l-4.99-5zm-6 0C7.01 14 5 11.99 5 9.5S7.01 5 9.5 5 14 7.01 14 9.5 11.99 14 9.5 14z"/></svg>
<div class="t " style="left:15px;top:131.76px;font-size:16px;line-height:16px;color:#fff;font-weight:normal;font-style:normal;-webkit-text-stroke:0.15px #fff">Dashboard</div>
<div class="t " style="left:15px;top:179.76px;font-size:16px;line-height:16px;color:#fff;font-weight:normal;font-style:normal;-webkit-text-stroke:0.15px #fff">Notifications</div>
<div class="t " style="left:15px;top:227.76px;font-size:16px;line-height:16px;color:#fff;font-weight:normal;font-style:normal;-webkit-text-stroke:0.15px #fff">Quality Assurance</div>
<div class="a" style="left:0;top:260px;width:299px;height:48px;background:#03a9f4"></div>
<div class="t " style="left:15px;top:275.76px;font-size:16px;line-height:16px;color:#fff;font-weight:normal;font-style:normal;-webkit-text-stroke:0.15px #fff">Spec and Conformance</div>
<div class="t " style="left:15px;top:323.76px;font-size:16px;line-height:16px;color:#fff;font-weight:normal;font-style:normal;-webkit-text-stroke:0.15px #fff">Field</div>
<div class="t " style="left:15px;top:371.76px;font-size:16px;line-height:16px;color:#fff;font-weight:normal;font-style:normal;-webkit-text-stroke:0.15px #fff">Payment</div>
<div class="t " style="left:15px;top:419.76px;font-size:16px;line-height:16px;color:#fff;font-weight:normal;font-style:normal;-webkit-text-stroke:0.15px #fff">Cost Management</div>
<div class="t " style="left:15px;top:467.76px;font-size:16px;line-height:16px;color:#fff;font-weight:normal;font-style:normal;-webkit-text-stroke:0.15px #fff">Document Management</div>
<div class="t " style="left:15px;top:515.76px;font-size:16px;line-height:16px;color:#fff;font-weight:normal;font-style:normal;-webkit-text-stroke:0.15px #fff">QA Setup</div>
<div class="t " style="left:15px;top:563.76px;font-size:16px;line-height:16px;color:#fff;font-weight:normal;font-style:normal;-webkit-text-stroke:0.15px #fff">Financials Setup</div>
<div class="a" style="left:0;top:596px;width:299px;height:1px;background:#e8e8e8"></div>
<div class="t " style="left:15px;top:612.76px;font-size:16px;line-height:16px;color:#fff;font-weight:normal;font-style:normal;-webkit-text-stroke:0.15px #fff">Other Setup</div>
<div class="t " style="left:15px;top:660.76px;font-size:16px;line-height:16px;color:#fff;font-weight:normal;font-style:normal;-webkit-text-stroke:0.15px #fff">Project Settings</div>
<div class="t " style="left:15px;top:708.76px;font-size:16px;line-height:16px;color:#fff;font-weight:normal;font-style:normal;-webkit-text-stroke:0.15px #fff">Help and Documentation</div>
<div class="t " style="left:9px;top:813.85px;font-size:14px;line-height:14px;color:#fff;font-weight:normal;font-style:normal;letter-spacing:0.12px">v9.6.13498 Fri 09/29/2023</div>
</div>
<div class="a" style="left:299px;top:260px;width:192px;height:139px;background:#404040;z-index:30;box-shadow:0 3px 5px rgba(0,0,0,.25)">
<div class="a" style="left:0;top:8px;width:192px;height:31px;background:#03a9f4"></div>
<div class="t " style="left:16px;top:15.35px;font-size:14px;line-height:14px;color:#f4f4f4;font-weight:normal;font-style:normal;-webkit-text-stroke:0.25px #f4f4f4">Approvals</div>
<div class="t " style="left:16px;top:46.35px;font-size:14px;line-height:14px;color:#f4f4f4;font-weight:normal;font-style:normal;-webkit-text-stroke:0.25px #f4f4f4">Inspection Test Plan (ITP)</div>
<div class="t " style="left:16px;top:77.35px;font-size:14px;line-height:14px;color:#f4f4f4;font-weight:normal;font-style:normal;-webkit-text-stroke:0.25px #f4f4f4">Photos</div>
<div class="t " style="left:16px;top:108.35px;font-size:14px;line-height:14px;color:#f4f4f4;font-weight:normal;font-style:normal;-webkit-text-stroke:0.25px #f4f4f4">Punchlists</div>
</div>
<div class="a" style="left:0;top:1px;width:1564px;height:3px;background:#000;z-index:60"></div>
<div class="a" style="left:0;top:834px;width:1564px;height:3px;background:#000;z-index:60"></div>
<div class="a" style="left:1561px;top:1px;width:3px;height:836px;background:#000;z-index:60"></div>
</body></html>
